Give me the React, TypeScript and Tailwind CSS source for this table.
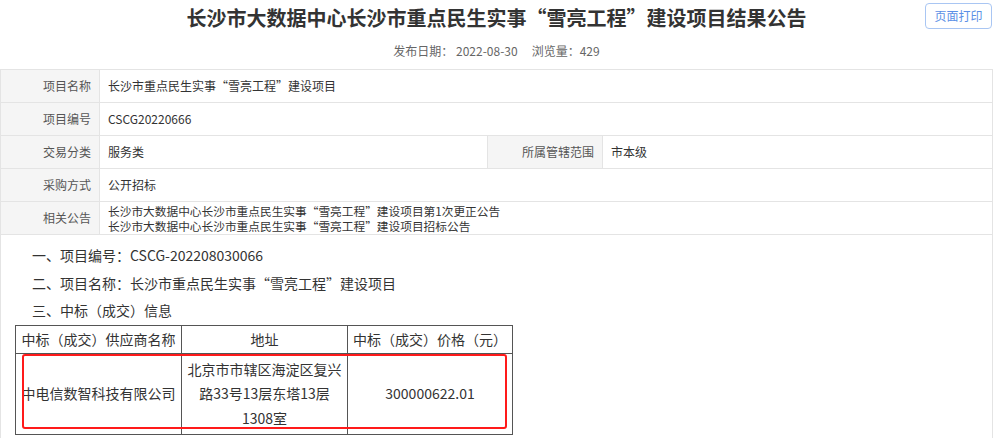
import type { FC, ReactNode } from 'react';

const font = { fontFamily: '"Noto Sans CJK SC", "Noto Sans", sans-serif' };

type InfoRow = { label: string; value: ReactNode; extra?: { label: string; value: string } };

const rows: InfoRow[] = [
  { label: '项目名称', value: '长沙市重点民生实事“雪亮工程”建设项目' },
  { label: '项目编号', value: 'CSCG20220666' },
  { label: '交易分类', value: '服务类', extra: { label: '所属管辖范围', value: '市本级' } },
  { label: '采购方式', value: '公开招标' },
  {
    label: '相关公告',
    value: (
      <div className="text-[11.7px] leading-[15px]">
        <div>长沙市大数据中心长沙市重点民生实事“雪亮工程”建设项目第1次更正公告</div>
        <div>长沙市大数据中心长沙市重点民生实事“雪亮工程”建设项目招标公告</div>
      </div>
    ),
  },
];

const App: FC = () => {
  return (
    <div className="h-[438px] w-[1000px] overflow-hidden bg-white" style={font}>
      <div className="w-[993px]">
        {/* Header */}
        <div className="grid h-[69px] grid-cols-[1fr_auto_1fr]">
          <div />
          <div className="flex flex-col items-center">
            <h1 className="pt-[4px] text-[20px] font-bold leading-[28px] text-[#333]">
              长沙市大数据中心长沙市重点民生实事“雪亮工程”建设项目结果公告
            </h1>
            <div className="mt-[11px] flex gap-[14px] text-[12px] leading-[16px] text-[#666]">
              <span>发布日期： 2022-08-30</span>
              <span>浏览量：429</span>
            </div>
          </div>
          <div className="flex justify-end pt-[3px] pr-[1px]">
            <button className="h-[26px] w-[67px] rounded-[4px] border border-[#a9c6f3] text-[12px] text-[#5b8fe6]">
              页面打印
            </button>
          </div>
        </div>

        {/* Info table */}
        <div className="border-x border-t border-[#e4e4e4] text-[12px]">
          {rows.map((r) => (
            <div key={r.label} className="flex h-[33px] border-b border-[#e4e4e4]">
              <div className="flex w-[99px] shrink-0 items-center justify-end border-r border-[#e4e4e4] bg-[#f5f5f5] pr-[8px] text-[#555]">
                {r.label}
              </div>
              <div className="flex w-[388px] flex-1 items-center pl-[8px] text-[#333]">{r.value}</div>
              {r.extra && (
                <>
                  <div className="flex w-[116px] shrink-0 items-center justify-end border-x border-[#e4e4e4] bg-[#f5f5f5] pr-[8px] text-[#555]">
                    {r.extra.label}
                  </div>
                  <div className="flex w-[389px] shrink-0 items-center pl-[8px] text-[#333]">{r.extra.value}</div>
                </>
              )}
            </div>
          ))}
        </div>

        {/* Content */}
        <div className="h-[203px] border-x border-[#e4e4e4] pt-[7px] text-[14px] text-[#333]">
          <div className="pl-[31px] leading-[27.5px]">
            <p>一、项目编号：CSCG-202208030066</p>
            <p>二、项目名称：长沙市重点民生实事“雪亮工程”建设项目</p>
            <p>三、中标（成交）信息</p>
          </div>
          <div className="relative ml-[14px] w-[498px]">
            <table className="w-full border-collapse text-center">
              <thead>
                <tr className="h-[28px]">
                  <th className="w-[166px] border border-[#555] font-normal">中标（成交）供应商名称</th>
                  <th className="w-[166px] border border-[#555] font-normal">地址</th>
                  <th className="border border-[#555] font-normal">中标（成交）价格（元）</th>
                </tr>
              </thead>
              <tbody>
                <tr className="h-[81px]">
                  <td className="border border-[#555]">中电信数智科技有限公司</td>
                  <td className="border border-[#555] px-[4px] leading-[24.5px]">
                    北京市市辖区海淀区复兴
                    <br />
                    路33号13层东塔13层
                    <br />
                    1308室
                  </td>
                  <td className="border border-[#555]">300000622.01</td>
                </tr>
              </tbody>
            </table>
            {/* highlight box */}
            <div className="pointer-events-none absolute top-[29px] left-[7px] h-[75px] w-[485px] rounded-[3px] border-2 border-[#ff1a1a]" />
          </div>
        </div>
      </div>
    </div>
  );
};

export default App;
